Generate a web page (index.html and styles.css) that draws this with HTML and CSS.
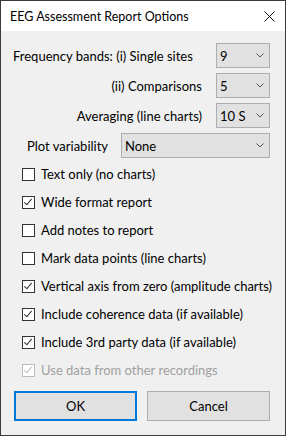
FILE: index.html
```html
<!DOCTYPE html>
<html lang="en">
<head>
  <meta charset="UTF-8">
  <title>EEG Assessment Report Options</title>
  <link rel="stylesheet" href="styles.css">
</head>
<body>
  <div class="window">
    <div class="titlebar">
      <span class="title">EEG Assessment Report Options</span>
      <svg class="close" width="11" height="11" viewBox="0 0 11 11">
        <path d="M0.5 0.5 L10.5 10.5 M10.5 0.5 L0.5 10.5" stroke="#111" stroke-width="1" fill="none"/>
      </svg>
    </div>
    <div class="content">
      <div class="combo-row first">
        <span class="label">Frequency bands: (i) Single sites</span>
        <div class="combo small"><span>9</span><svg class="chev" width="8" height="5" viewBox="0 0 8 5"><path d="M0.5 0.5 L4 4 L7.5 0.5" stroke="#555" fill="none"/></svg></div>
      </div>
      <div class="combo-row">
        <span class="label">(ii) Comparisons</span>
        <div class="combo small"><span>5</span><svg class="chev" width="8" height="5" viewBox="0 0 8 5"><path d="M0.5 0.5 L4 4 L7.5 0.5" stroke="#555" fill="none"/></svg></div>
      </div>
      <div class="combo-row">
        <span class="label">Averaging (line charts)</span>
        <div class="combo small"><span>10 S</span><svg class="chev" width="8" height="5" viewBox="0 0 8 5"><path d="M0.5 0.5 L4 4 L7.5 0.5" stroke="#555" fill="none"/></svg></div>
      </div>
      <div class="combo-row plot">
        <span class="label">Plot variability</span>
        <div class="combo wide"><span>None</span><svg class="chev" width="8" height="5" viewBox="0 0 8 5"><path d="M0.5 0.5 L4 4 L7.5 0.5" stroke="#555" fill="none"/></svg></div>
      </div>

      <div class="checks">
        <div class="check"><span class="box"></span>Text only (no charts)</div>
        <div class="check"><span class="box on"></span>Wide format report</div>
        <div class="check"><span class="box"></span>Add notes to report</div>
        <div class="check"><span class="box"></span>Mark data points (line charts)</div>
        <div class="check"><span class="box on"></span>Vertical axis from zero (amplitude charts)</div>
        <div class="check"><span class="box on"></span>Include coherence data (if available)</div>
        <div class="check"><span class="box on"></span>Include 3rd party data (if available)</div>
        <div class="check disabled"><span class="box on"></span>Use data from other recordings</div>
      </div>

      <div class="buttons">
        <button class="btn default">OK</button>
        <button class="btn">Cancel</button>
      </div>
    </div>
  </div>
</body>
</html>
```

FILE: styles.css
```css
body {
  margin: 0;
  font-family: Lato, "Noto Sans", sans-serif;
  font-size: 13px;
  color: #000;
}
.window {
  width: 286px;
  height: 436px;
  box-sizing: border-box;
  border: 1px solid #3a3a3a;
  display: flex;
  flex-direction: column;
}
.titlebar {
  height: 30px;
  background: #fff;
  display: flex;
  align-items: center;
  justify-content: space-between;
  padding: 0 10px 0 9px;
}
.title {
  font-size: 12.5px;
}
.content {
  flex: 1;
  background: #f0f0f0;
  padding: 12px 15px 0 12px;
  white-space: nowrap;
}
.combo-row {
  display: flex;
  justify-content: flex-end;
  align-items: center;
  height: 25px;
  margin-bottom: 5px;
}
.combo-row .label {
  margin-right: 14px;
}
.combo-row.first {
  justify-content: space-between;
}
.combo-row.first .label {
  margin-right: 0;
}
.combo-row.plot {
  justify-content: space-between;
  margin-bottom: 2px;
  padding-left: 14px;
}
.combo-row.plot .label {
  margin-right: 0;
}
.combo {
  height: 25px;
  box-sizing: border-box;
  background: #e1e1e1;
  border: 1px solid #adadad;
  display: flex;
  align-items: center;
  justify-content: space-between;
  padding: 0 5px 0 3px;
}
.combo.small {
  width: 54px;
}
.combo.wide {
  width: 149px;
}
.chev {
  display: block;
}
.checks {
  padding-left: 9px;
}
.check {
  height: 28px;
  display: flex;
  align-items: center;
}
.box {
  width: 13px;
  height: 13px;
  box-sizing: border-box;
  border: 1px solid #333;
  background: #fff;
  margin-right: 6px;
  position: relative;
  flex-shrink: 0;
}
.box.on::after {
  content: "";
  position: absolute;
  left: 3px;
  top: 0px;
  width: 3px;
  height: 7px;
  border: solid #333;
  border-width: 0 1px 1px 0;
  transform: rotate(40deg);
}
.check.disabled {
  color: #a0a0a0;
}
.check.disabled .box {
  border-color: #bcbcbc;
}
.check.disabled .box.on::after {
  border-color: #bcbcbc;
}
.buttons {
  display: flex;
  justify-content: space-between;
  margin-top: 7px;
  padding-left: 1px;
}
.btn {
  width: 123px;
  height: 30px;
  box-sizing: border-box;
  background: #e1e1e1;
  border: 1px solid #adadad;
  font-family: inherit;
  font-size: 13px;
  color: #000;
  padding: 0;
}
.btn.default {
  border: 2px solid #0078d7;
}
```
